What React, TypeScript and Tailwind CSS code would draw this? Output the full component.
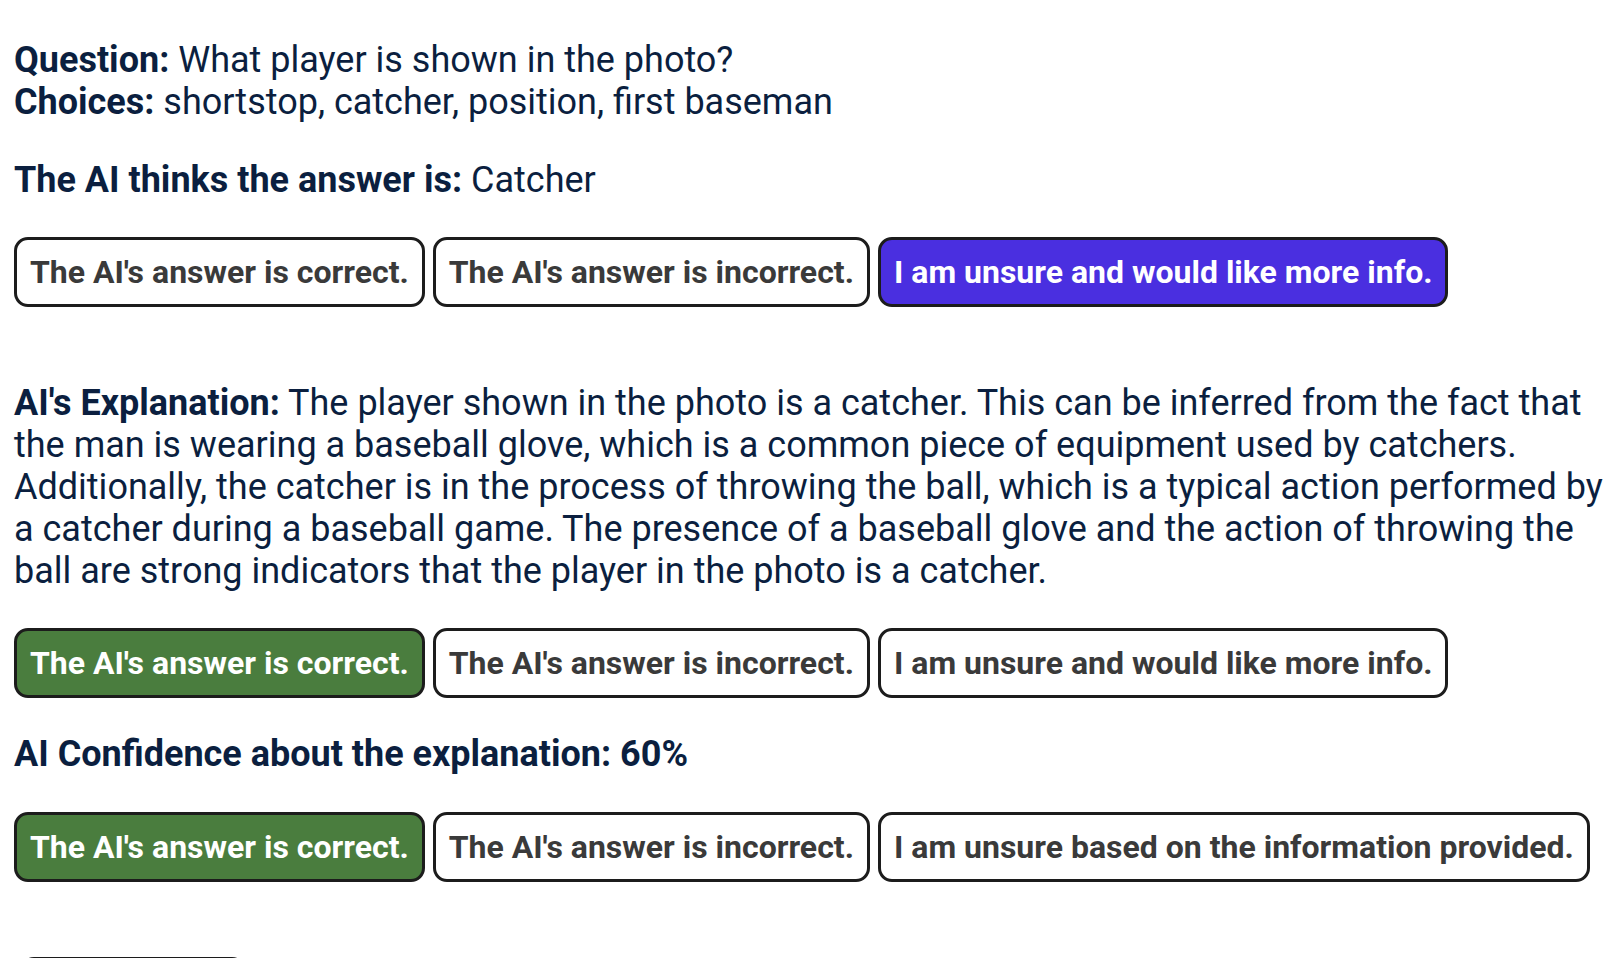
import React from "react";

type Tone = "plain" | "purple" | "green";

const toneClass: Record<Tone, string> = {
	plain: "bg-white text-[#3a3a3a]",
	purple: "bg-[#4a2fe0] text-white",
	green: "bg-[#4a7d3e] text-white",
};

const ChoiceButton: React.FC<{ label: string; tone?: Tone }> = ({ label, tone = "plain" }) => (
	<button
		className={`rounded-[14px] border-[3px] border-[#1c1c1c] px-[13px] py-[14px] text-[32px] font-bold leading-[36px] whitespace-nowrap ${toneClass[tone]}`}
	>
		{label}
	</button>
);

const ButtonRow: React.FC<{ items: { label: string; tone?: Tone }[]; className?: string }> = ({
	items,
	className = "",
}) => (
	<div className={`flex flex-row gap-[8px] ${className}`}>
		{items.map((item) => (
			<ChoiceButton key={item.label} label={item.label} tone={item.tone} />
		))}
	</div>
);

export default function App() {
	return (
		<div
			className="min-h-screen bg-white pl-[14px] pr-[10px] pt-[39px] text-[36px] leading-[42px] text-[#0b1f3f]"
			style={{ fontFamily: "Roboto, 'Liberation Sans', sans-serif" }}
		>
			<p>
				<b>Question:</b> What player is shown in the photo?
				<br />
				<b>Choices:</b> shortstop, catcher, position, first baseman
			</p>

			<p className="mt-[36px]">
				<b>The AI thinks the answer is:</b> Catcher
			</p>

			<ButtonRow
				className="mt-[36px]"
				items={[
					{ label: "The AI's answer is correct." },
					{ label: "The AI's answer is incorrect." },
					{ label: "I am unsure and would like more info.", tone: "purple" },
				]}
			/>

			<p className="mt-[75px]">
				<b>AI's Explanation:</b> The player shown in the photo is a catcher. This can be inferred from the fact
				that the man is wearing a baseball glove, which is a common piece of equipment used by catchers.
				Additionally, the catcher is in the process of throwing the ball, which is a typical action performed by
				a catcher during a baseball game. The presence of a baseball glove and the action of throwing the ball are
				strong indicators that the player in the photo is a catcher.
			</p>

			<ButtonRow
				className="mt-[36px]"
				items={[
					{ label: "The AI's answer is correct.", tone: "green" },
					{ label: "The AI's answer is incorrect." },
					{ label: "I am unsure and would like more info." },
				]}
			/>

			<p className="mt-[35px] font-bold">AI Confidence about the explanation: 60%</p>

			<ButtonRow
				className="mt-[37px]"
				items={[
					{ label: "The AI's answer is correct.", tone: "green" },
					{ label: "The AI's answer is incorrect." },
					{ label: "I am unsure based on the information provided." },
				]}
			/>

			<div className="mt-[75px] pl-[6px]">
				<button className="h-[60px] w-[226px] rounded-[14px] border-[3px] border-[#1c1c1c] bg-white" />
			</div>
		</div>
	);
}
